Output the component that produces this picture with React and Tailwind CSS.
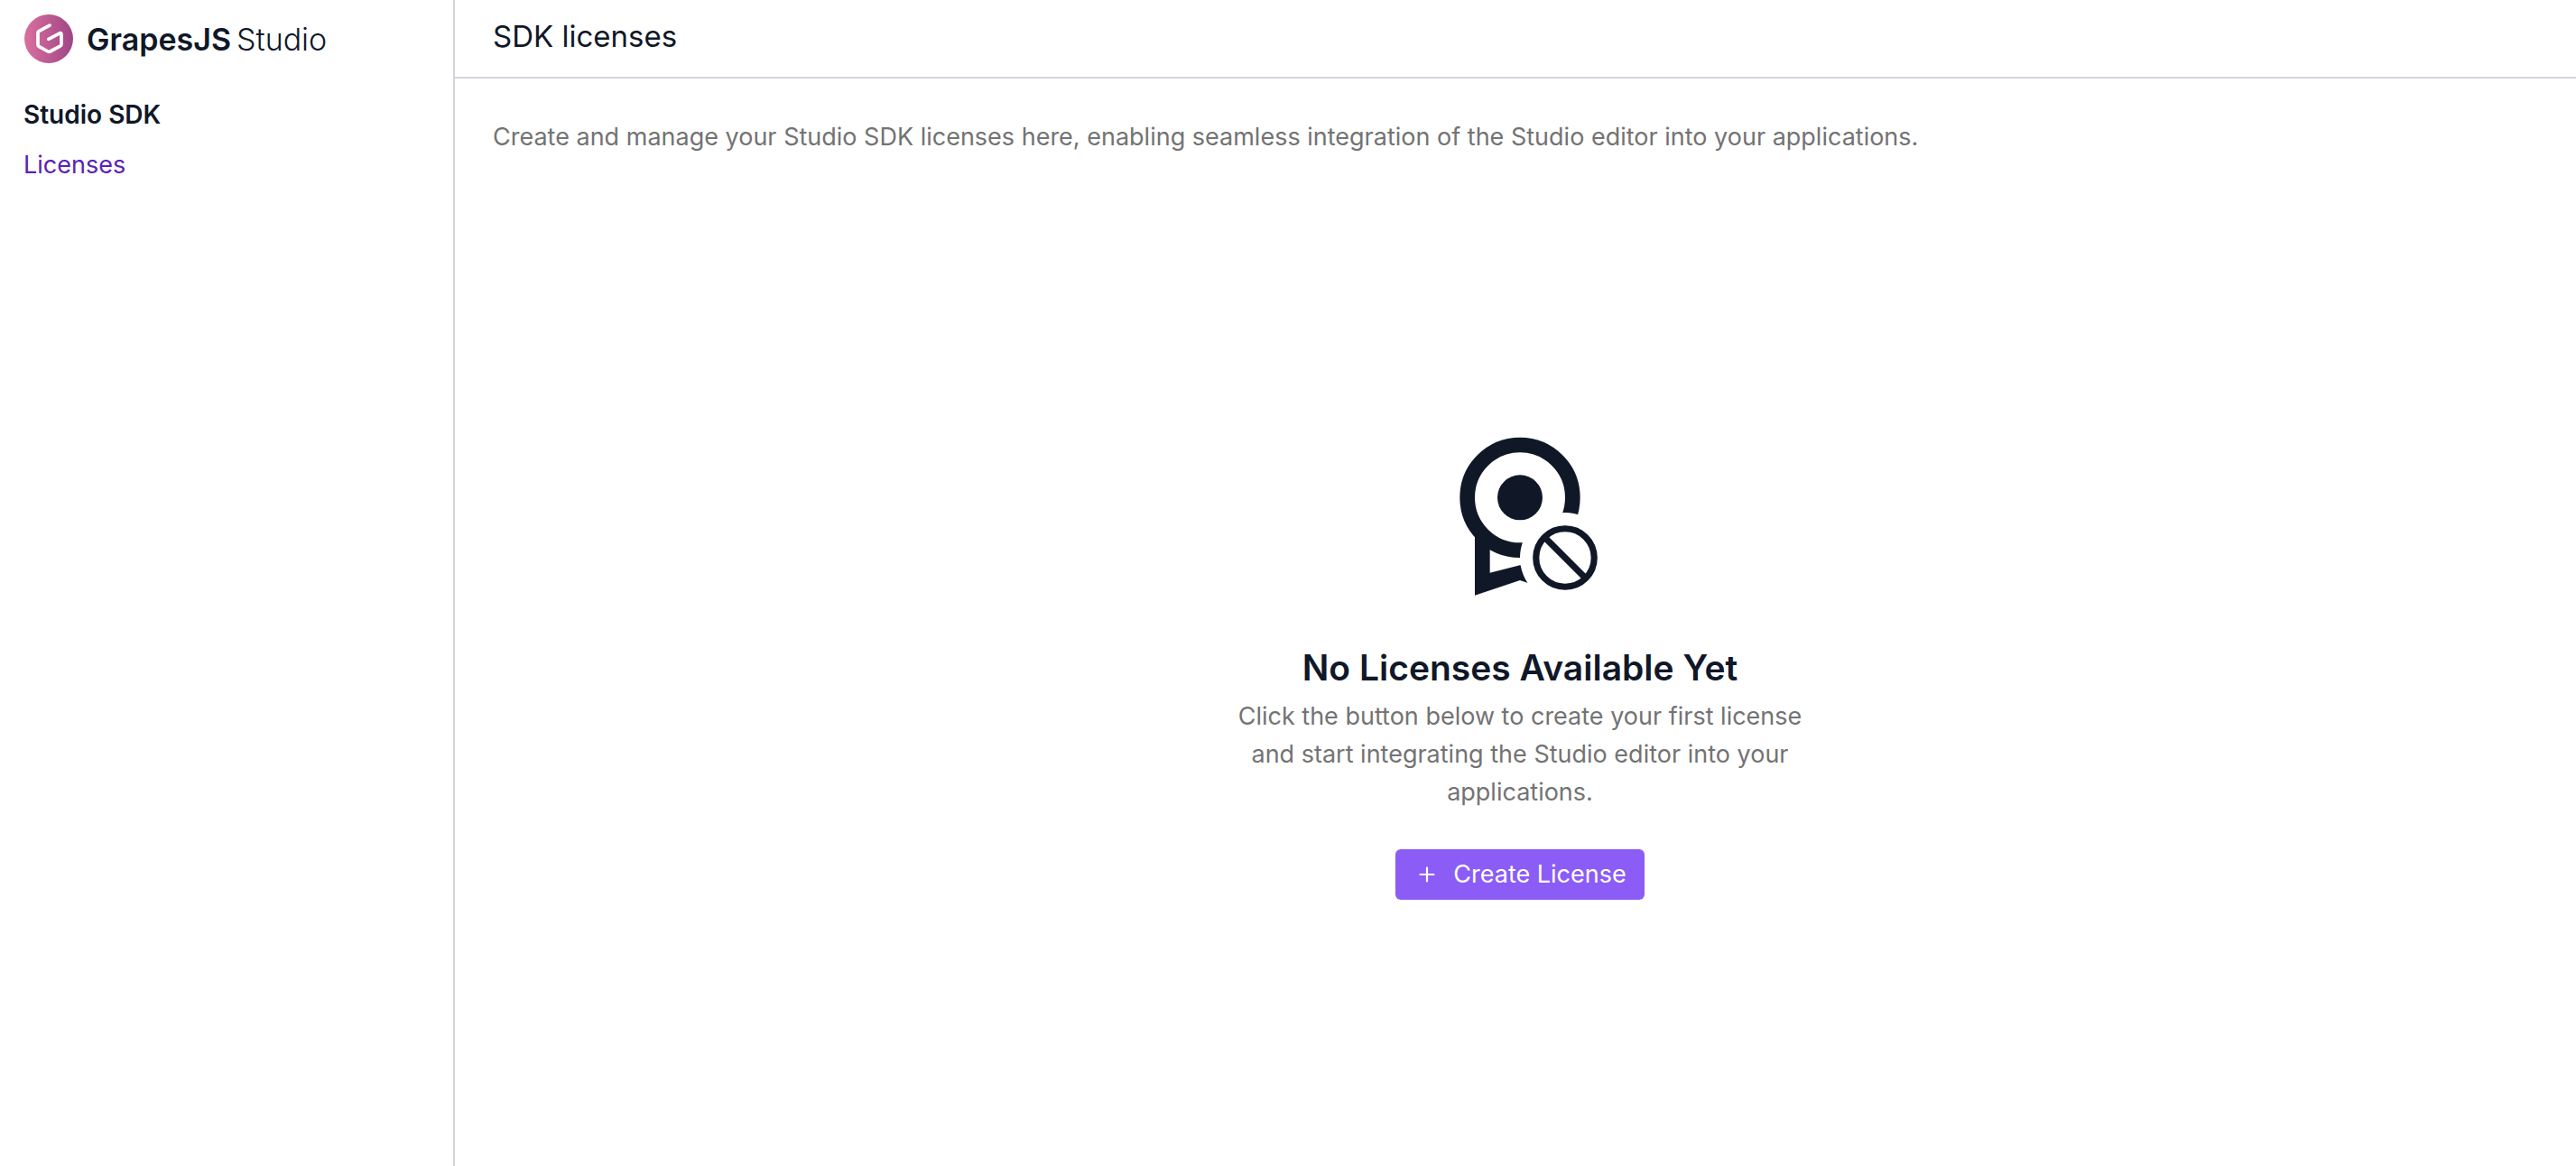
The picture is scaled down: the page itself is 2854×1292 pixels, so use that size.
function Logo() {
  return (
    <svg viewBox="0 0 56 56" className="size-14 shrink-0" aria-hidden="true">
      <defs>
        <linearGradient id="logo-fill" x1="0" y1="0" x2="1" y2="0">
          <stop offset="0" stopColor="#d9709e" />
          <stop offset="1" stopColor="#a04586" />
        </linearGradient>
      </defs>
      <circle cx="28" cy="27" r="27" fill="url(#logo-fill)" />
      <path
        d="M29 12.2 17 18.6Q16 19.2 16 20.4V33.6Q16 34.8 17 35.4L27 41Q28.3 41.8 29.6 41L41 34.8Q42 34.2 42 33V22Q42 20 40.2 20.8L27.8 27.3"
        fill="none"
        stroke="#fff"
        strokeWidth="3.7"
        strokeLinecap="round"
        strokeLinejoin="round"
      />
    </svg>
  );
}

function NoLicenseIcon() {
  return (
    <svg viewBox="0 0 24 24" className="size-[200px]" aria-hidden="true">
      <mask id="badge-cutout" maskUnits="userSpaceOnUse" x="0" y="0" width="24" height="24">
        <rect width="24" height="24" fill="#fff" />
        <circle cx="18" cy="18" r="6" fill="#000" />
      </mask>
      <g mask="url(#badge-cutout)">
        <path d="M6 15V23L12 21L18 23V15H16V20L12 19L8 20V15Z" fill="currentColor" />
        <circle cx="12" cy="10" r="7" fill="none" stroke="currentColor" strokeWidth="2" />
        <circle cx="12" cy="10" r="3" fill="currentColor" />
      </g>
      <g fill="none" stroke="currentColor" strokeWidth="0.86">
        <circle cx="18" cy="18" r="3.87" />
        <path d="M15.3 15.3 20.7 20.7" />
      </g>
    </svg>
  );
}

function PlusIcon() {
  return (
    <svg viewBox="0 0 28 28" className="size-7" aria-hidden="true">
      <path d="M15 6.5V21.5M7.5 14H22.5" stroke="currentColor" strokeWidth="2.2" strokeLinecap="round" />
    </svg>
  );
}

export default function App() {
  return (
    <div className="flex min-h-screen bg-white font-['Inter',sans-serif] text-[27px] leading-[42px] text-[#101828]">
      <aside className="w-[504px] shrink-0 border-r-2 border-gray-300 px-[26px] pt-4">
        <a href="#home" className="flex items-center gap-[14px] text-[34px] leading-[56px]">
          <Logo />
          <span className="flex gap-1.5">
            <span className="font-semibold">GrapesJS</span>
            <span className="font-light">Studio</span>
          </span>
        </a>
        <nav className="mt-[34px] flex flex-col gap-[14px]">
          <h2 className="text-[28px] font-semibold">Studio SDK</h2>
          <a href="#licenses" className="text-[#5b21b6]">Licenses</a>
        </nav>
      </aside>
      <div className="flex min-w-0 flex-1 flex-col">
        <header className="border-b-2 border-gray-300 px-[42px] pt-3 pb-[17px]">
          <h1 className="text-[33px] leading-[56px]">SDK licenses</h1>
        </header>
        <main className="flex flex-1 flex-col pt-11 pr-8 pl-[42px]">
          <p className="text-[#737373]">
            Create and manage your Studio SDK licenses here, enabling seamless integration of the Studio editor into your applications.
          </p>
          <section className="flex flex-1 flex-col items-center justify-center text-center">
            <NoLicenseIcon />
            <h2 className="mt-11 text-[39px] leading-[56px] font-semibold">No Licenses Available Yet</h2>
            <p className="mt-[5px] w-[640px] text-[#737373]">
              Click the button below to create your first license and start integrating the Studio editor into your applications.
            </p>
            <button type="button" className="mt-[42px] flex h-14 items-center gap-4 rounded-md bg-[#8b5cf6] px-5 text-white">
              <PlusIcon />
              Create License
            </button>
          </section>
        </main>
      </div>
    </div>
  );
}
